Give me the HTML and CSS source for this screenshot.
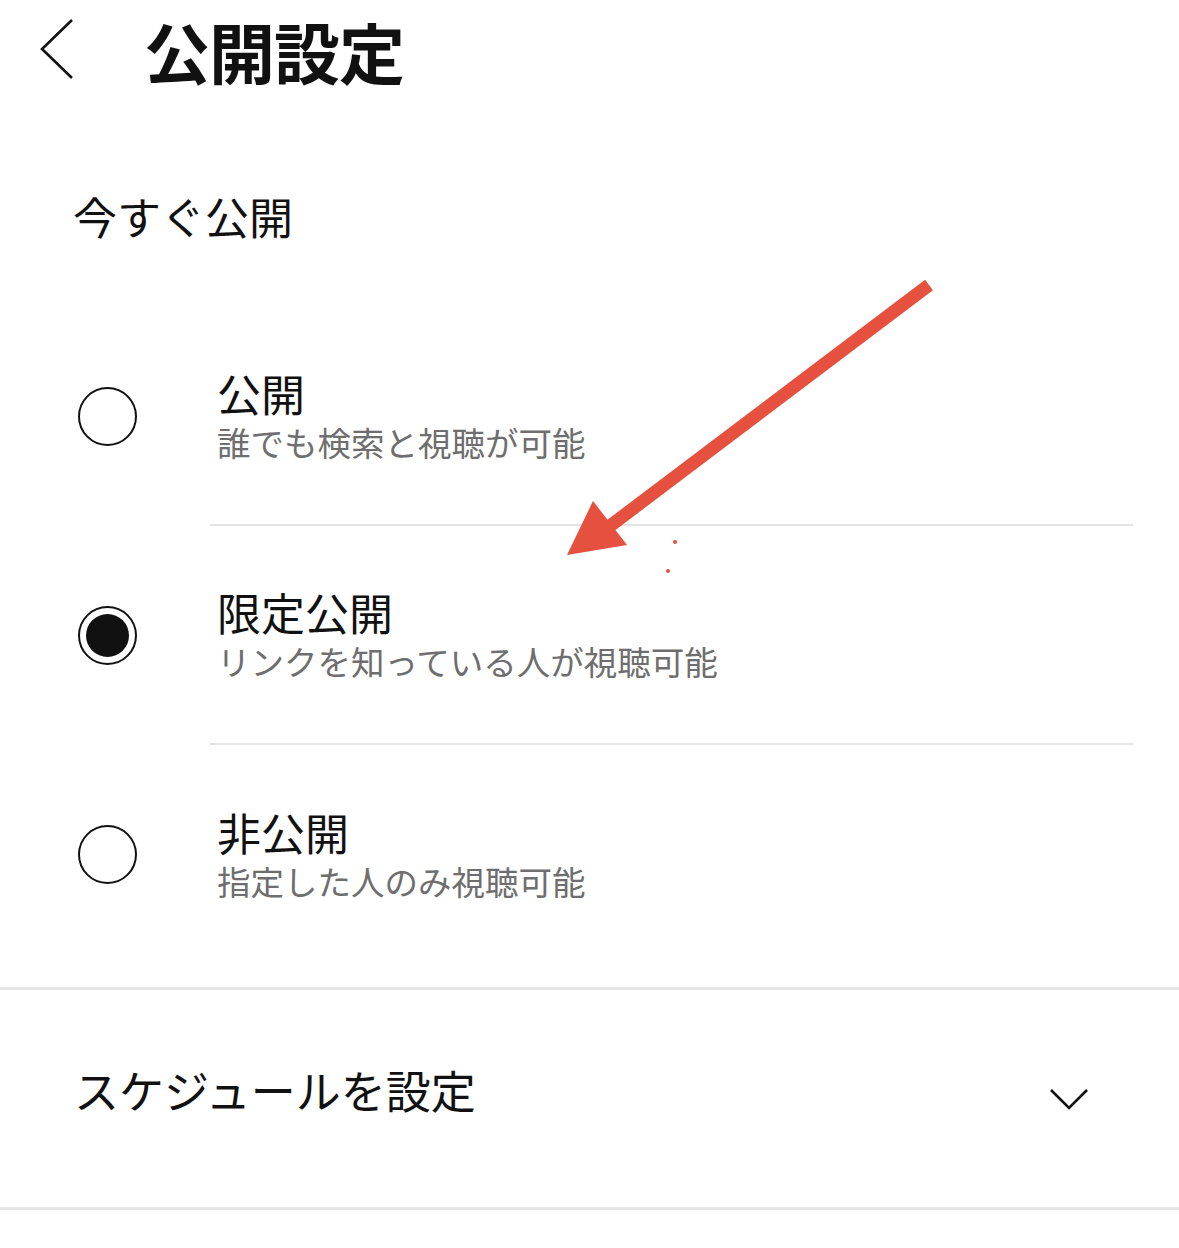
FILE: index.html
```html
<!DOCTYPE html>
<html lang="ja">
<head>
  <meta charset="UTF-8" />
  <meta name="viewport" content="width=device-width, initial-scale=1">
  <title>公開設定</title>
  <link rel="stylesheet" href="styles.css">
</head>
<body>
  <header class="top-bar">
    <button class="back-button" aria-label="戻る">
      <svg width="40" height="64" viewBox="0 0 40 64">
        <polyline points="32,2 2,31 32,60" fill="none" stroke="#111" stroke-width="2.6" />
      </svg>
    </button>
    <h1>公開設定</h1>
  </header>

  <main>
    <div class="section-label">今すぐ公開</div>

    <ul class="options">
      <li class="option">
        <span class="radio"></span>
        <div class="option-body">
          <div class="option-title">公開</div>
          <div class="option-desc">誰でも検索と視聴が可能</div>
        </div>
      </li>
      <li class="option">
        <span class="radio checked"></span>
        <div class="option-body">
          <div class="option-title">限定公開</div>
          <div class="option-desc">リンクを知っている人が視聴可能</div>
        </div>
      </li>
      <li class="option">
        <span class="radio"></span>
        <div class="option-body">
          <div class="option-title">非公開</div>
          <div class="option-desc">指定した人のみ視聴可能</div>
        </div>
      </li>
    </ul>

    <div class="schedule">
      <span>スケジュールを設定</span>
      <svg width="40" height="24" viewBox="0 0 40 24">
        <polyline points="2,3 20,21 38,3" fill="none" stroke="#111" stroke-width="2.6" />
      </svg>
    </div>
  </main>

  <!-- Annotation arrow drawn over the screenshot -->
  <svg class="annotation" width="1179" height="1248" viewBox="0 0 1179 1248">
    <line x1="929" y1="285" x2="606" y2="529" stroke="#e5503f" stroke-width="13" />
    <polygon points="567,555 593,501 627,545" fill="#e5503f" />
    <circle cx="675" cy="542" r="2" fill="#e5503f" />
    <circle cx="668" cy="571" r="2" fill="#e5503f" />
  </svg>
</body>
</html>
```

FILE: styles.css
```css
/* Base */
body {
  margin: 0;
  background: #fff;
  color: #111;
  font-family: "Noto Sans CJK JP", "Noto Sans", sans-serif;
  position: relative;
  min-height: 1248px;
}
ul {
  list-style: none;
  margin: 0;
  padding: 0;
}
/* Header */
.top-bar {
  height: 100px;
  display: flex;
  align-items: center;
}
.back-button {
  background: none;
  border: none;
  padding: 0;
  margin-left: 40px;
  width: 40px;
  height: 64px;
  cursor: pointer;
}
.back-button svg {
  display: block;
}
.top-bar h1 {
  margin: 0 0 0 64px;
  font-size: 66px;
  font-weight: 700;
  line-height: 1;
  letter-spacing: -1px;
}
/* Section label */
.section-label {
  padding: 86px 0 0 73px;
  font-size: 44px;
  line-height: 60px;
}
/* Radio options */
.options {
  margin-top: 61px;
}
.option {
  height: 219px;
  display: flex;
  align-items: center;
}
.radio {
  box-sizing: border-box;
  width: 59px;
  height: 59px;
  margin-left: 78px;
  border: 2.5px solid #111;
  border-radius: 50%;
  display: flex;
  align-items: center;
  justify-content: center;
  flex-shrink: 0;
}
.radio.checked::after {
  content: "";
  width: 43px;
  height: 43px;
  border-radius: 50%;
  background: #111;
}
.option-body {
  flex: 1;
  align-self: stretch;
  margin: 0 46px 0 73px;
  padding-left: 7px;
  display: flex;
  flex-direction: column;
  justify-content: center;
  border-bottom: 2px solid #e4e4e4;
}
.option:last-child .option-body {
  border-bottom: none;
}
.option-title {
  font-size: 44px;
  line-height: 52px;
}
.option-desc {
  font-size: 33.5px;
  line-height: 46px;
  color: #6e6e6e;
}
/* Schedule row */
.schedule {
  margin-top: 23px;
  height: 217px;
  border-top: 3px solid #e4e4e4;
  border-bottom: 3px solid #e4e4e4;
  display: flex;
  align-items: center;
  justify-content: space-between;
  padding: 0 90px 0 74px;
  font-size: 45px;
}
.schedule span {
  margin-top: -18px;
}
/* Annotation overlay */
.annotation {
  position: absolute;
  top: 0;
  left: 0;
  pointer-events: none;
}
```
